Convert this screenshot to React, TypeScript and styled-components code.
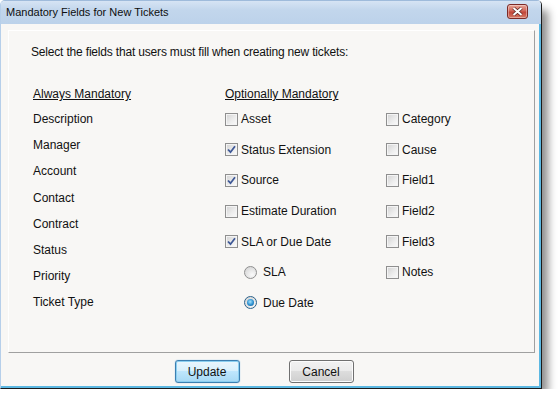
import styled, { createGlobalStyle } from 'styled-components';

const GlobalStyle = createGlobalStyle`
  html, body {
    margin: 0;
    padding: 0;
    background: #ffffff;
  }
  body {
    font-family: "Liberation Sans", Arial, sans-serif;
    font-size: 12px;
    color: #111;
  }
`;

const Window = styled.div`
  width: 542px;
  height: 389px;
  box-sizing: border-box;
  display: flex;
  flex-direction: column;
  border: 1px solid;
  border-color: #9fbbdb #1b1b1b #1b1b1b #b6cfea;
  border-radius: 5px 5px 0 0;
  box-shadow: 8px 8px 9px -2px rgba(0, 0, 0, 0.45);
  background: #f8f7f5;
`;

const TitleBar = styled.div`
  height: 23px;
  display: flex;
  align-items: center;
  justify-content: space-between;
  padding: 0 13px 0 5px;
  border-radius: 4px 4px 0 0;
  background: linear-gradient(#d6e4f4, #c2d6ec 40%, #bcd2ea);
`;

const Title = styled.span`
  font-size: 11px;
  color: #0e0e0e;
  margin-top: -1px;
`;

const CloseButton = styled.div`
  width: 21px;
  height: 15px;
  margin-top: -2px;
  box-sizing: border-box;
  border: 1px solid #7c2a26;
  border-radius: 3px;
  display: flex;
  align-items: center;
  justify-content: center;
  background: linear-gradient(#e8a597, #d0675a 45%, #c2463a 55%, #d67a66);
  box-shadow: inset 0 0 0 1px rgba(255, 255, 255, 0.35);
`;

const Body = styled.div`
  flex: 1;
  display: flex;
  flex-direction: column;
  padding: 6px 4px 0 7px;
  border-right: 2px solid #5cb8e2;
  border-bottom: 2px solid #5cb8e2;
`;

const Panel = styled.div`
  height: 323px;
  box-sizing: border-box;
  border: 1px solid;
  border-color: #ffffff #a0a0a0 #a0a0a0 #ffffff;
  padding: 14px 0 0 22px;
`;

const Intro = styled.div`
  line-height: 14px;
  letter-spacing: -0.18px;
`;

const Columns = styled.div`
  display: grid;
  grid-template-columns: 192px 161px 1fr;
  margin-top: 28px;
  padding-left: 2px;
`;

const Column = styled.div`
  display: flex;
  flex-direction: column;
`;

const Heading = styled.div<{ $gap: number }>`
  line-height: 14px;
  text-decoration: underline;
  margin-bottom: ${(p) => p.$gap}px;
`;

const Field = styled.div`
  line-height: 26.2px;
`;

const OptionRow = styled.label<{ $indent?: boolean }>`
  height: 30.6px;
  display: flex;
  align-items: center;
  gap: 3px;
  padding-left: ${(p) => (p.$indent ? 19 : 0)}px;
`;

const Box = styled.span`
  width: 13px;
  height: 13px;
  box-sizing: border-box;
  border: 1px solid #8f8f8f;
  display: flex;
  align-items: center;
  justify-content: center;
  background: linear-gradient(135deg, #d2d2d2, #eeeeee 60%, #fbfbfb);
  box-shadow: inset 0 0 0 1px #f4f4f4;
`;

const Radio = styled.span<{ $on?: boolean }>`
  width: 13px;
  height: 13px;
  box-sizing: border-box;
  border-radius: 50%;
  border: 1px solid ${(p) => (p.$on ? '#2c628b' : '#8f8f8f')};
  display: flex;
  align-items: center;
  justify-content: center;
  background: radial-gradient(circle at 65% 70%, #fafafa, #d8d8d8 80%);
  margin-right: 3px;
`;

const Dot = styled.span`
  width: 7px;
  height: 7px;
  border-radius: 50%;
  background: radial-gradient(circle at 45% 40%, #a6e2fb, #2a8fd0 55%, #14507f);
`;

const Footer = styled.div`
  flex: 1;
  display: flex;
  justify-content: center;
  align-items: flex-start;
  gap: 49px;
  padding: 7px 15px 0 0;
`;

const Button = styled.button<{ $default?: boolean }>`
  width: 65px;
  height: 23px;
  box-sizing: border-box;
  font-family: "Liberation Sans", Arial, sans-serif;
  font-size: 12px;
  color: #111;
  border-radius: 3px;
  padding: 0;
  border: 1px solid ${(p) => (p.$default ? '#3c7fb1' : '#707070')};
  background: ${(p) =>
    p.$default
      ? 'linear-gradient(#eaf6fd, #d9f0fc 45%, #bee6fd 50%, #a7d9f5)'
      : 'linear-gradient(#f2f2f2, #ebebeb 45%, #dddddd 50%, #cfcfcf)'};
  box-shadow: ${(p) =>
    p.$default ? 'inset 0 0 0 1px #8ccff0, 0 0 1px #5aa9dc' : 'inset 0 0 0 1px #fcfcfc'};
`;

function Check() {
  return (
    <svg width="9" height="9" viewBox="0 0 9 9">
      <path d="M1 4.5 L3.5 7.2 L8 1.2" fill="none" stroke="#3e5896" strokeWidth="1.8" />
    </svg>
  );
}

function CloseGlyph() {
  return (
    <svg width="11" height="9" viewBox="0 0 11 9">
      <path d="M1.5 1 L9.5 8 M9.5 1 L1.5 8" stroke="#5b2622" strokeWidth="3.4" />
      <path d="M1.5 1 L9.5 8 M9.5 1 L1.5 8" stroke="#ffffff" strokeWidth="2" />
    </svg>
  );
}

type Option = { label: string; checked?: boolean };

const always = ['Description', 'Manager', 'Account', 'Contact', 'Contract', 'Status', 'Priority', 'Ticket Type'];

const optional: Option[] = [
  { label: 'Asset' },
  { label: 'Status Extension', checked: true },
  { label: 'Source', checked: true },
  { label: 'Estimate Duration' },
  { label: 'SLA or Due Date', checked: true },
];

const extra: Option[] = [
  { label: 'Category' },
  { label: 'Cause' },
  { label: 'Field1' },
  { label: 'Field2' },
  { label: 'Field3' },
  { label: 'Notes' },
];

function CheckRow({ label, checked }: Option) {
  return (
    <OptionRow>
      <Box>{checked && <Check />}</Box>
      {label}
    </OptionRow>
  );
}

export default function App() {
  return (
    <>
      <GlobalStyle />
      <Window>
        <TitleBar>
          <Title>Mandatory Fields for New Tickets</Title>
          <CloseButton>
            <CloseGlyph />
          </CloseButton>
        </TitleBar>
        <Body>
          <Panel>
            <Intro>Select the fields that users must fill when creating new tickets:</Intro>
            <Columns>
              <Column>
                <Heading $gap={5}>Always Mandatory</Heading>
                {always.map((f) => (
                  <Field key={f}>{f}</Field>
                ))}
              </Column>
              <Column>
                <Heading $gap={3}>Optionally Mandatory</Heading>
                {optional.map((o) => (
                  <CheckRow key={o.label} {...o} />
                ))}
                <OptionRow $indent>
                  <Radio />
                  SLA
                </OptionRow>
                <OptionRow $indent>
                  <Radio $on>
                    <Dot />
                  </Radio>
                  Due Date
                </OptionRow>
              </Column>
              <Column>
                <Heading $gap={3} style={{ visibility: 'hidden' }}>&nbsp;</Heading>
                {extra.map((o) => (
                  <CheckRow key={o.label} {...o} />
                ))}
              </Column>
            </Columns>
          </Panel>
          <Footer>
            <Button $default>Update</Button>
            <Button>Cancel</Button>
          </Footer>
        </Body>
      </Window>
    </>
  );
}
